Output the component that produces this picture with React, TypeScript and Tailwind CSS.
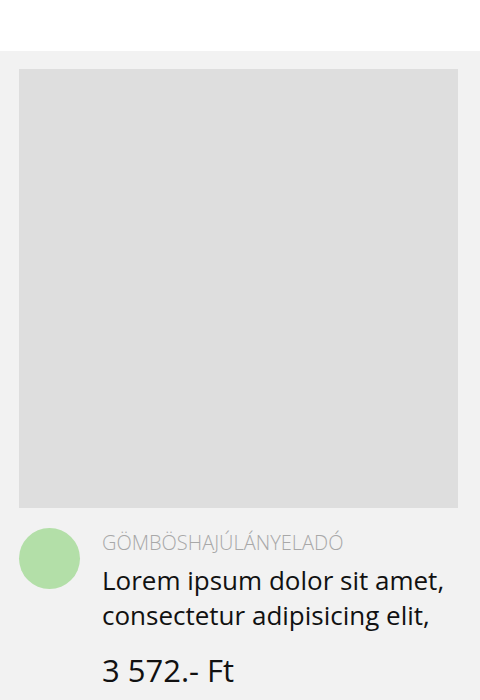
import React from "react";

export default function App() {
  return (
    <div className="w-[480px] h-[700px] overflow-hidden bg-white" style={{ fontFamily: '"Open Sans", sans-serif' }}>
      <div className="h-[51px] bg-white" />
      <div className="bg-[#f2f2f2] pt-[18px] pl-[19px] pb-[40px]">
        <div className="w-[439px] h-[439px] bg-[#dedede]" />
        <div className="flex mt-[20px]">
          <div className="w-[61px] h-[61px] rounded-full bg-[#b3dfa8] shrink-0" />
          <div className="ml-[22px] flex flex-col">
            <div className="text-[20px] font-light uppercase text-[#a8a8a8] leading-[28px] mt-[1px]">
              GÖMBÖSHAJÚLÁNYELADÓ
            </div>
            <div className="text-[26px] text-[#111] leading-[35px] mt-[6px]">
              Lorem ipsum dolor sit amet,<br />consectetur adipisicing elit,
            </div>
            <div className="text-[31px] text-[#111] leading-[40px] mt-[17px]">
              3 572.- Ft
            </div>
          </div>
        </div>
      </div>
    </div>
  );
}
